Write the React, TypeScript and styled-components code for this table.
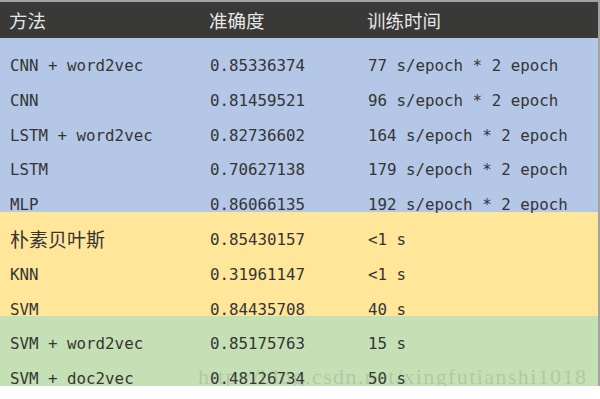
import React from "react";
import styled, { createGlobalStyle } from "styled-components";

const Global = createGlobalStyle`
  html, body { margin: 0; padding: 0; background: #ffffff; }
  body { width: 600px; height: 399px; overflow: hidden; }
`;

const Table = styled.div`
  position: relative;
  width: 600px;
  box-sizing: border-box;
  border-top: 2px solid #a3a3a3;
  border-right: 2px solid #a3a3a3;
  overflow: hidden;
  color: #353535;
`;

const Grid = styled.div`
  display: grid;
  grid-template-columns: 200px 158px 1fr;
  padding-left: 10px;
`;

const Header = styled(Grid)`
  height: 36px;
  align-items: center;
  background: #393937;
  color: #e6e6e6;
  font-family: "Noto Sans CJK SC", "Noto Sans", sans-serif;
  font-size: 18.5px;
  line-height: 20px;
  padding-left: 9px;
  padding-bottom: 1px;
  box-sizing: border-box;
`;

const Band = styled.div<{ $bg: string }>`
  background: ${(p) => p.$bg};
`;

const Row = styled(Grid)`
  height: 34.8px;
  box-sizing: border-box;
  padding-top: 20px;
  font-family: "DejaVu Sans Mono", monospace;
  font-size: 15.8px;
  line-height: 16px;
  white-space: pre;
`;

const Cjk = styled.span`
  font-family: "Noto Sans CJK SC", "Noto Sans", sans-serif;
  font-size: 19px;
  line-height: 16px;
  position: relative;
  top: -1px;
`;

const Watermark = styled.div`
  position: absolute;
  left: 198px;
  top: 364px;
  font-family: "Liberation Serif", serif;
  font-size: 22px;
  line-height: 22px;
  letter-spacing: 1.4px;
  color: rgba(110, 110, 110, 0.22);
  white-space: nowrap;
  pointer-events: none;
`;

type R = { name: string; acc: string; time: string; cjk?: boolean };

const groups: { bg: string; rows: R[] }[] = [
  {
    bg: "#b4c7e7",
    rows: [
      { name: "CNN + word2vec", acc: "0.85336374", time: "77 s/epoch * 2 epoch" },
      { name: "CNN", acc: "0.81459521", time: "96 s/epoch * 2 epoch" },
      { name: "LSTM + word2vec", acc: "0.82736602", time: "164 s/epoch * 2 epoch" },
      { name: "LSTM", acc: "0.70627138", time: "179 s/epoch * 2 epoch" },
      { name: "MLP", acc: "0.86066135", time: "192 s/epoch * 2 epoch" },
    ],
  },
  {
    bg: "#ffe699",
    rows: [
      { name: "朴素贝叶斯", acc: "0.85430157", time: "<1 s", cjk: true },
      { name: "KNN", acc: "0.31961147", time: "<1 s" },
      { name: "SVM", acc: "0.84435708", time: "40 s" },
    ],
  },
  {
    bg: "#c5e0b4",
    rows: [
      { name: "SVM + word2vec", acc: "0.85175763", time: "15 s" },
      { name: "SVM + doc2vec", acc: "0.48126734", time: "50 s" },
    ],
  },
];

export default function App() {
  return (
    <>
      <Global />
      <Table>
        <Header>
          <span>方法</span>
          <span>准确度</span>
          <span>训练时间</span>
        </Header>
        {groups.map((g, gi) => (
          <Band key={gi} $bg={g.bg}>
            {g.rows.map((r) => (
              <Row key={r.name}>
                <span>{r.cjk ? <Cjk>{r.name}</Cjk> : r.name}</span>
                <span>{r.acc}</span>
                <span>{r.time}</span>
              </Row>
            ))}
          </Band>
        ))}
        <Watermark>http://blog.csdn.net/xingfutianshi1018</Watermark>
      </Table>
    </>
  );
}
